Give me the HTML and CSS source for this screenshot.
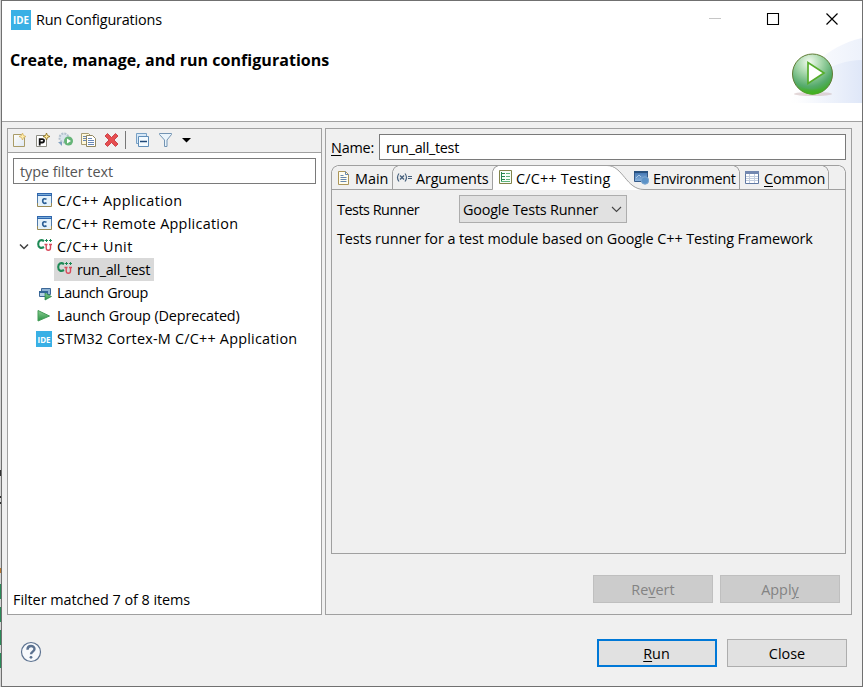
FILE: index.html
```html
<!DOCTYPE html>
<html lang="en">
<head>
<meta charset="utf-8">
<title>Run Configurations</title>
<link rel="stylesheet" href="styles.css">
</head>
<body>
<svg width="0" height="0" class="defs">
  <defs>
    <linearGradient id="blue" x1="0" y1="0" x2="0" y2="1"><stop offset="0" stop-color="#3a6fae"/><stop offset="1" stop-color="#8db6df"/></linearGradient>
    <linearGradient id="green" x1="0" y1="0" x2="0" y2="1"><stop offset="0" stop-color="#8ccf93"/><stop offset="1" stop-color="#279044"/></linearGradient>
    <linearGradient id="paper" x1="0" y1="0" x2="1" y2="1"><stop offset="0" stop-color="#fffef8"/><stop offset="1" stop-color="#dfe8f5"/></linearGradient>
    <symbol id="capp" viewBox="0 0 16 16"><path d="M.5 1.500h14v12H.5z" fill="#e4f2fb" stroke="#9a8a55"/><path d="M0 0h15v3H0z" fill="#2f66ad"/><path d="M1 1h13v1H1z" fill="#79acd9"/><path d="M.5 3v7M14.500 3v7" stroke="#5079a8"/><path d="M9.500 6.200C6.800 5 5.700 6.300 5.700 8s1.200 3 3.800 1.900" fill="none" stroke="#2b5f96" stroke-width="1.700"/></symbol>
    <symbol id="cunit" viewBox="0 0 16 16"><path d="M7 2.200C4 0 1.200 1.600 1.200 5s2.600 5 5.800 3" fill="none" stroke="#1f8a56" stroke-width="2.100"/><path d="M8 1.500h3M9.500 0v3M12 1.500h3M13.500 0v3" stroke="#1f8a56"/><path d="M7.500 5.500h3M12 5.500h3M9.200 5v4c0 3 4.300 3 4.300 0V5" fill="none" stroke="#d84b5b" stroke-width="1.400"/></symbol>
  </defs>
</svg>
<div class="desktop">
<div class="window">
  <header class="banner">
    <div class="titlebar">
      <svg class="ide" width="20" height="20"><rect width="20" height="20" fill="#39b0e5"/><text x="2" y="14" textLength="16" lengthAdjust="spacingAndGlyphs">IDE</text></svg>
      <span class="caption">Run Configurations</span>
      <svg class="winctl" width="132" height="16"><path d="M2 6.500h12" stroke="#c6c6c6"/><path d="M60.500 1.500h11v11h-11z" fill="none" stroke="#000" stroke-width="1.100"/><path d="M119.500 1.500l11 11M130.500 1.500l-11 11" stroke="#000" stroke-width="1.200"/></svg>
    </div>
    <h1>Create, manage, and run configurations</h1>
    <svg class="hero" width="80" height="70" viewBox="0 0 80 70">
      <defs>
        <linearGradient id="swoosh" x1="0" x2="1"><stop offset="0" stop-color="#fff"/><stop offset="1" stop-color="#dfe7f8"/></linearGradient>
        <radialGradient id="ball" cx=".42" cy=".2" r=".85"><stop offset="0" stop-color="#f2faef"/><stop offset=".35" stop-color="#a8d8ac"/><stop offset=".72" stop-color="#56ab6c"/><stop offset="1" stop-color="#37a81c"/></radialGradient>
        <linearGradient id="rim" x1="0" y1="0" x2="0" y2="1"><stop offset=".4" stop-color="#4bb32c" stop-opacity="0"/><stop offset="1" stop-color="#42b41b"/></linearGradient>
      </defs>
      <path d="M8 69C22 38 42 13 80 4v65z" fill="url(#swoosh)" opacity=".55"/>
      <path d="M12 69C28 43 48 27 80 26v43z" fill="url(#swoosh)"/>
      <ellipse cx="31" cy="60" rx="19" ry="2" fill="#c3a8a8" opacity=".45"/>
      <circle cx="30.500" cy="40" r="20" fill="url(#ball)" stroke="#607c35"/>
      <path d="M12 46a19 19 0 0 0 37 0c-5 12-31 13-37 0z" fill="url(#rim)"/>
      <path d="M26 28.500v21l16-10.500z" fill="#fff" stroke="#56ad2b" stroke-width="1.700"/>
    </svg>
  </header>

  <main class="body">
    <section class="left">
      <div class="toolbar">
        <svg width="16" height="16"><path d="M1.500 2.500h8l3 3v9h-11z" fill="url(#paper)" stroke="#a99b67"/><path d="M10.500 1l1 2.500L14 4.500l-2.500 1-1 2.500-1-2.500-2.500-1 2.500-1z" fill="#ffedaa" stroke="#d5b260" stroke-width=".8"/></svg>
        <svg width="16" height="16"><path d="M1.500 3.500h10v11h-10z" fill="#fff" stroke="#8c8c83"/><path d="M4.700 13.500V7.200h2.500c2.500 0 2.500 3.300 0 3.300H4.700" fill="none" stroke="#111" stroke-width="1.800"/><path d="M11.500 1l1 2.500L15 4.500l-2.500 1-1 2.500-1-2.500-2.500-1 2.500-1z" fill="#ffe999" stroke="#876b16" stroke-width=".8"/></svg>
        <svg width="16" height="16"><circle cx="6" cy="6" r="4.500" fill="#dbe5ed" stroke="#b3c1ce" stroke-width="2" stroke-dasharray="2 1"/><path d="M0 10h4v4z" fill="#7e9fc0"/><circle cx="10.500" cy="9" r="4.500" fill="#65b477"/><path d="M9 6.500v5l4-2.500z" fill="#fff"/></svg>
        <svg width="16" height="16"><path d="M.5 1.500h7l2 2v9h-9z" fill="#fff8da" stroke="#a89c72"/><path d="M5.500 3.500h6l3 3v8h-9z" fill="#fff" stroke="#91865e"/><path d="M2 4.500h3M2 6.500h3M2 8.500h3M7 6.500h4M7 8.500h6M7 10.500h6M7 12.500h6" stroke="#6887b6"/></svg>
        <svg width="16" height="16"><path d="M1 4l2.500-2.500 4 4 4-4L14 4l-4 4 4 4-2.500 2.500-4-4-4 4L1 12l4-4z" fill="#e64e50" stroke="#c42d35" stroke-width=".8"/></svg>
        <i class="sep"></i>
        <svg class="collapse" width="16" height="16"><path d="M1.500 1.500h10v10h-10z" fill="#d7e8f7" stroke="#77a0c5"/><path d="M3.500 4.500h10v10h-10z" fill="#f3faff" stroke="#608eb9"/><path d="M5 9.500h7" stroke="#1e4878" stroke-width="1.500"/></svg>
        <svg width="16" height="16"><path d="M1.500 1.500h12v1L9 8v6.500H6.500V8l-5-5.500z" fill="#eaf4fb" stroke="#7394b3"/></svg>
        <svg width="12" height="16"><path d="M1 6h9l-4.500 4.500z"/></svg>
      </div>
      <div class="leftbody">
        <div class="filter">type filter text</div>
        <ul class="tree">
          <li><svg width="16" height="16"><use href="#capp"/></svg><span class="t1">C/C++ Application</span></li>
          <li><svg width="16" height="16"><use href="#capp"/></svg><span class="t2">C/C++ Remote Application</span></li>
          <li class="open"><svg class="twisty" width="10" height="8"><path d="M1 1.500l4 4 4-4" fill="none" stroke="#404040" stroke-width="1.500"/></svg><svg width="16" height="16"><use href="#cunit"/></svg><span class="t3">C/C++ Unit</span></li>
          <li class="child"><div class="selected"><svg width="16" height="16"><use href="#cunit"/></svg><span class="t4">run_all_test</span></div></li>
          <li><svg width="16" height="16"><path d="M4.500 3.500h9v6h-9z" fill="#8fb3d4" stroke="#3c6897"/><path d="M2.500 6.500h8v5h-8z" fill="#b6d0e7" stroke="#3c6897"/><path d="M2 6h9v2H2z" fill="#326497"/><path d="M8 8v7l6.500-3.500z" fill="url(#green)" stroke="#278149" stroke-width=".7"/></svg><span class="t5">Launch Group</span></li>
          <li><svg width="16" height="16"><path d="M1 2.500v10.500L12.500 8z" fill="url(#green)" stroke="#449c57"/></svg><span class="t6">Launch Group (Deprecated)</span></li>
          <li class="stm"><svg class="ide small" width="16" height="16"><rect width="16" height="16" fill="#39b0e5"/><text x="1.500" y="11.500" textLength="13" lengthAdjust="spacingAndGlyphs">IDE</text></svg><span class="t7">STM32 Cortex-M C/C++ Application</span></li>
        </ul>
        <p class="matched">Filter matched 7 of 8 items</p>
      </div>
    </section>

    <section class="right">
      <div class="namerow"><label><u>N</u>ame:</label><div class="name"><span class="t4">run_all_test</span></div></div>
      <div class="folder">
        <div class="tabs">
          <svg class="tabart" width="515" height="25" fill="none" stroke="#a0a0a0"><path d="M162 25V6l5-5.500H278c14 0 17 24 35 24V25z" fill="#fff" stroke="none"/><path d="M.5 25V6.500q1-5 6-6h502q5 1 6 6V25M0 24.500h161.500V6.500q1-5 6-6H276c16 0 19 24 37 24h202M61.500 24V6.500q1-5 6-6M408.500 24V6.500q-1-5-6-6M497.500 24V6.500q-1-5-6-6"/></svg>
          <div class="tab main"><svg width="16" height="16"><path d="M2.500 1.500h7l3 3v10h-10z" fill="#fffdf0" stroke="#ad9658"/><path d="M9.500 1.500v3h3M4.500 5.500h3M4.500 7.500h6M4.500 9.500h6M4.500 11.500h6" fill="none" stroke="#6787ad"/></svg><span>Main</span></div>
          <div class="tab args"><svg width="17" height="16" fill="none" stroke="#47617d"><path d="M3 3.500Q0 7.500 3 11.500M9 3.500q3 4 0 8" stroke-width="1.200"/><path d="M4 5.500l4 4M8 5.500l-4 4" stroke-width="1.400"/><path d="M12 6.500h4M12 8.500h4"/></svg><span>Arguments</span></div>
          <div class="tab testing"><svg width="16" height="16"><path d="M2.500.5h12v13h-12z" fill="#f7fff8" stroke="#82844b"/><path d="M4.500 2v9M4 3.500h4M4 6.500h4M4 9.500h4" stroke="#24854c"/><path d="M9 3.500h4M9 6.500h4M9 9.500h4M4 11.500h9" stroke="#5fb47d"/></svg><span>C/C++ Testing</span></div>
          <div class="tab env"><svg width="16" height="16"><path d="M1.500 1.500h13v10h-13z" fill="url(#blue)" stroke="#365a88"/><path d="M1 1h14v2H1z" fill="#28517f"/><path d="M3 8l3-3 2 2" fill="none" stroke="#a9c8e5"/><circle cx="12" cy="10.500" r="3.700" fill="#5c92c7" stroke="#7ba5ce"/></svg><span>Environment</span></div>
          <div class="tab common"><svg width="16" height="16"><path d="M1.500 2v11.500h13V2z" fill="#fff" stroke="#6079a3"/><path d="M1 1h14v3H1z" fill="#7388b0"/><path d="M2 6.500h12M2 8.500h12M2 10.500h12M5.500 4v9M10.500 4v9" stroke="#c3cedf"/></svg><span><u>C</u>ommon</span></div>
        </div>
        <div class="content">
          <div class="runner"><span class="rlabel">Tests Runner</span><div class="combo"><span>Google Tests Runner</span><svg width="11" height="7"><path d="M1 1l4.500 4.500L10 1" fill="none" stroke="#444" stroke-width="1.100"/></svg></div></div>
          <p class="desc">Tests runner for a test module based on Google C++ Testing Framework</p>
        </div>
      </div>
      <div class="actions"><div class="btn disabled"><span>Re<u>v</u>ert</span></div><div class="btn disabled"><span>Appl<u>y</u></span></div></div>
    </section>
  </main>

  <footer>
    <svg width="22" height="22"><circle cx="11" cy="11" r="9.500" fill="#f7f9fc" stroke="#5c7290" stroke-width="1.200"/><path d="M7.500 8.700c0-5 7-4.500 7-.7 0 2.500-3.500 2.700-3.500 5.300" fill="none" stroke="#5c7290" stroke-width="2.400"/><circle cx="11" cy="16.300" r="1.400" fill="#5c7290"/></svg>
    <div class="btn default"><span><u>R</u>un</span></div><div class="btn"><span>Close</span></div>
  </footer>
</div>
</div>
</body>
</html>
```
FILE: styles.css
```css
* { box-sizing: border-box; }
body { margin: 0; width: 863px; height: 687px; overflow: hidden; font: 14.4px/20px "Open Sans", "Noto Sans", sans-serif; color: #000; }
.defs { position: absolute; }
svg { flex: none; display: block; }
span, label, .desc, .filter, .matched { white-space: nowrap; }
u { text-decoration: underline; text-decoration-thickness: 1px; text-underline-offset: 2px; }
h1, p, ul { margin: 0; padding: 0; }
.desktop { height: 687px; padding-left: 1px; background: linear-gradient(#d5d5d5 470px, #333 470px 476px, #d5d5d5 476px 496px, #333 496px 498px, #d5d5d5 498px 502px, #333 502px 504px, #d5d5d5 504px 568px, #b87830 568px 573px, #d5d5d5 573px 584px, #2a8a58 584px 599px, #d5d5d5 599px 607px, #2a8a58 607px 622px, #d5d5d5 622px 630px, #2a8a58 630px 645px, #d5d5d5 645px 653px, #2a8a58 653px 668px, #d5d5d5 668px); }
.window { width: 862px; height: 687px; border: 1px solid #707070; background: #f0f0f0; display: flex; flex-direction: column; }
.banner { position: relative; height: 121px; background: #fff; border-bottom: 1px solid #a0a0a0; flex: none; }
.titlebar { display: flex; align-items: center; height: 37px; padding: 0 23px 0 9px; }
.caption { margin-left: 5px; letter-spacing: -.17px; }
.winctl { margin-left: auto; }
.ide text { font: 700 10px "Open Sans", sans-serif; fill: #fff; }
.ide.small text { font-size: 9px; }
h1 { font-size: 16px; line-height: 22px; font-weight: 700; padding: 11px 0 0 8px; letter-spacing: .04px; }
.hero { position: absolute; right: 0; top: 33px; }
.body { display: flex; gap: 3px; padding: 6px 10px 0 5px; height: 493px; }
.left { width: 315px; height: 487px; border: 1px solid #a0a0a0; display: flex; flex-direction: column; background: #fff; }
.toolbar { height: 24px; background: #f0f0f0; border-bottom: 1px solid #a0a0a0; display: flex; align-items: center; gap: 7px; padding: 0 0 1px 4px; flex: none; }
.sep { width: 1px; height: 18px; background: #777; margin: 0 -1px 0 -2px; }
.collapse { margin-left: 3px; }
.leftbody { padding: 5px 5px 4px; flex: 1; display: flex; flex-direction: column; }
.filter { height: 26px; border: 1px solid #7a7a7a; padding: 3px 6px; color: #555; line-height: 19px; letter-spacing: -.05px; }
.tree { list-style: none; padding-top: 5px; }
.tree li { height: 23px; display: flex; align-items: center; padding-left: 24px; gap: 4px; }
.tree .open { padding-left: 6px; gap: 0; }
.open .twisty { margin-right: 8px; }
.open span { margin-left: 4px; }
.tree .child { padding-left: 41px; }
.tree .stm { padding-left: 23px; gap: 5px; }
.selected { display: flex; align-items: center; gap: 4px; height: 23px; width: 100px; background: #d9d9d9; padding-left: 3px; }
.t1 { letter-spacing: .4px; }
.t2 { letter-spacing: .28px; }
.t3 { letter-spacing: .4px; }
.t4 { letter-spacing: -.3px; }
.t5 { letter-spacing: -.35px; }
.t6 { letter-spacing: -.12px; }
.t7 { letter-spacing: .22px; }
.matched { margin-top: auto; letter-spacing: -.05px; }
.right { flex: 1; height: 487px; border: 1px solid #a0a0a0; padding: 5px; }
.namerow { display: flex; align-items: center; height: 26px; gap: 5px; }
.namerow label { width: 43px; padding-top: 1px; letter-spacing: -.2px; }
.name { flex: 1; height: 26px; background: #fff; border: 1px solid #7a7a7a; padding: 3px 6px; line-height: 20px; }
.folder { margin-top: 5px; width: 515px; height: 389px; display: flex; flex-direction: column; }
.tabs { position: relative; height: 25px; display: flex; flex: none; }
.tabart { position: absolute; left: 0; top: 0; }
.tab { position: relative; display: flex; align-items: center; height: 25px; gap: 3px; }
.tab span { padding-top: 2px; }
.tab.main { width: 61px; padding-left: 5px; }
.tab.args { width: 100px; padding-left: 4px; }
.args span { letter-spacing: -.15px; }
.tab.testing { width: 139px; padding-left: 5px; }
.testing span { letter-spacing: .2px; }
.tab.env { width: 109px; padding-left: 2px; gap: 4px; }
.env span { letter-spacing: -.36px; }
.tab.common { padding-left: 4px; gap: 4px; }
.common span { letter-spacing: -.1px; }
.content { border: 1px solid #a0a0a0; border-top: 0; flex: 1; padding: 5px; }
.runner { display: flex; align-items: center; height: 28px; }
.rlabel { width: 122px; padding-top: 2px; letter-spacing: -.48px; }
.combo { width: 168px; height: 28px; border: 1px solid #adadad; background: #e1e1e1; display: flex; align-items: center; justify-content: space-between; padding: 0 4px 0 3px; }
.combo span { padding-top: 2px; letter-spacing: -.2px; }
.desc { margin-top: 6px; letter-spacing: -.08px; }
.actions { display: flex; justify-content: flex-end; gap: 7px; padding: 21px 6px 0 0; }
.btn { width: 120px; height: 28px; padding-top: 2px; border: 1px solid #adadad; background: #e1e1e1; display: flex; justify-content: center; align-items: center; white-space: pre; }
.disabled { color: #838383; background: #ccc; border-color: #bfbfbf; }
.default { border: 2px solid #0078d7; }
.default span { margin-left: -1px; }
footer { display: flex; align-items: center; padding: 24px 15px 0 18px; gap: 10px; }
footer svg { margin: -2px auto 0 0; }
```
